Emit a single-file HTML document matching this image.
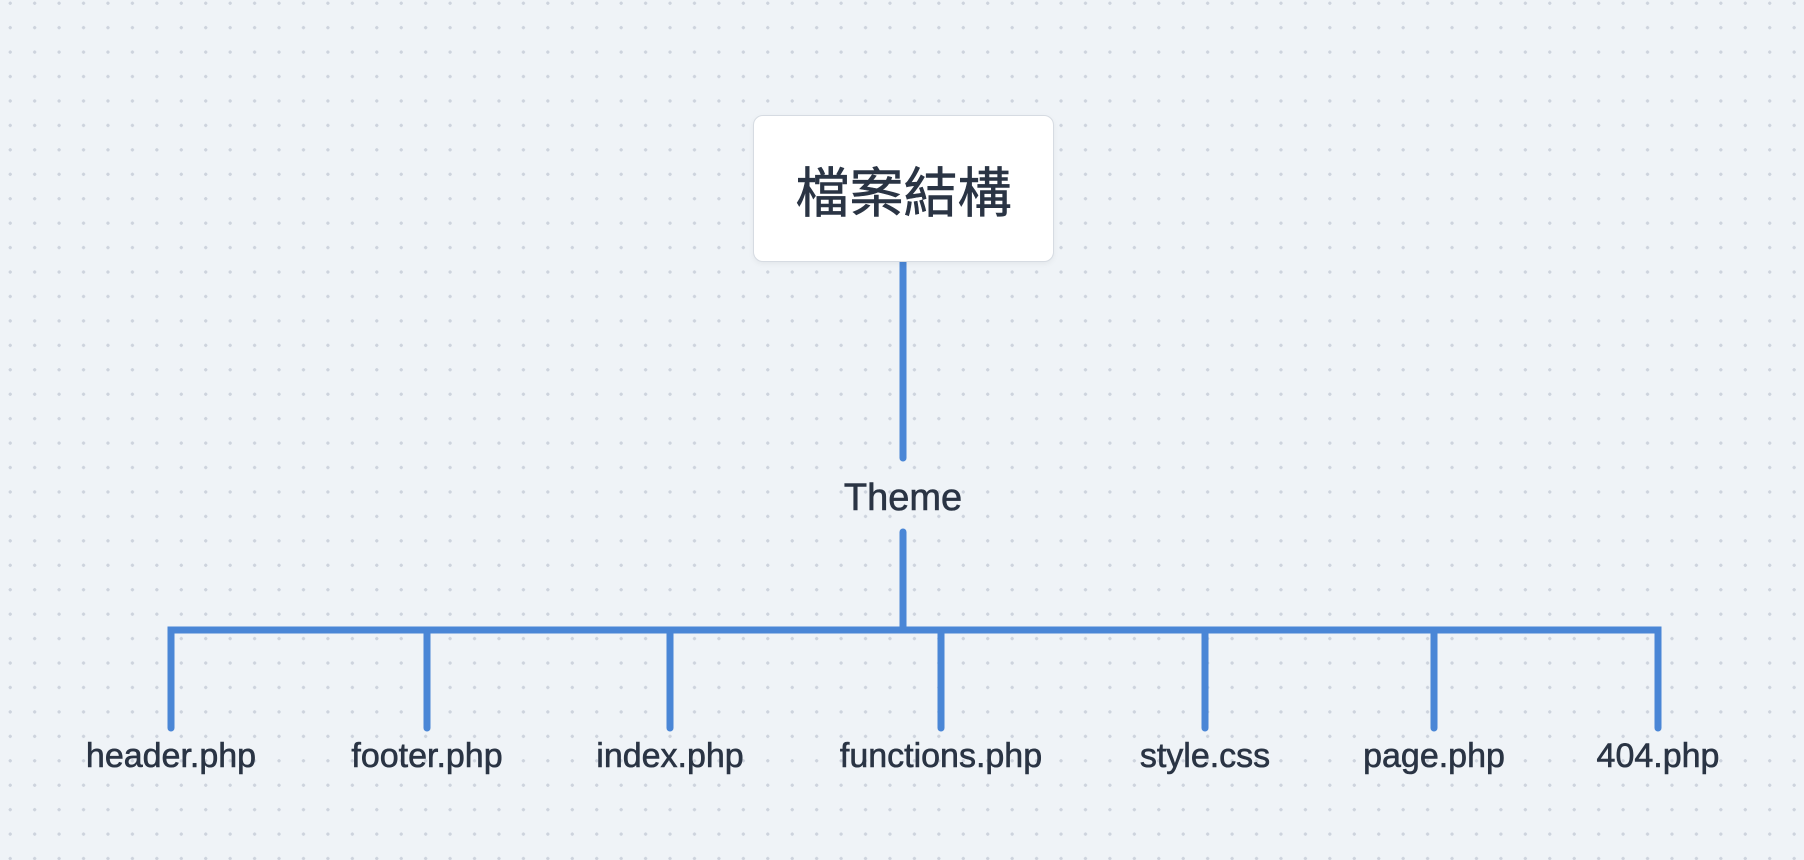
<!DOCTYPE html>
<html><head><meta charset="utf-8"><style>
html,body{margin:0;padding:0}
body{width:1804px;height:860px;overflow:hidden;position:relative;background-color:#eff3f7;
background-image:radial-gradient(circle,#cdd3dd 1.5px,transparent 1.8px);background-size:24.45px 24.45px;background-position:-2px -9px;
font-family:"Liberation Sans","Noto Sans CJK TC",sans-serif;color:#2a3444}
.box{position:absolute;left:753px;top:115px;width:301px;height:147px;background:#fff;border:1px solid #d6dbe2;border-radius:10px;box-sizing:border-box;box-shadow:0 2px 6px rgba(0,0,0,.05);display:flex;align-items:center;justify-content:center;font-size:54px;font-family:"Noto Sans CJK TC",sans-serif;font-weight:400;-webkit-text-stroke:0.6px #2a3444}
.l{position:absolute;font-size:34px;transform:translateX(-50%);white-space:nowrap;top:737px;-webkit-text-stroke:0.6px #2a3444}
</style></head><body>
<svg width="1804" height="860" style="position:absolute;left:0;top:0">
<g stroke="#4a86d6" stroke-width="7" stroke-linecap="round" fill="none">
<line x1="903" y1="262" x2="903" y2="458"/>
<line x1="903" y1="532" x2="903" y2="628"/>
<path d="M171 728 V630 H1658 V728"/>
<line x1="427" y1="630" x2="427" y2="728"/>
<line x1="670" y1="630" x2="670" y2="728"/>
<line x1="941" y1="630" x2="941" y2="728"/>
<line x1="1205" y1="630" x2="1205" y2="728"/>
<line x1="1434" y1="630" x2="1434" y2="728"/>
</g></svg>
<div class="box">檔案結構</div>
<div class="l" style="left:903px;top:477px;font-size:38px">Theme</div>
<div class="l" style="left:171px">header.php</div>
<div class="l" style="left:427px">footer.php</div>
<div class="l" style="left:670px">index.php</div>
<div class="l" style="left:941px">functions.php</div>
<div class="l" style="left:1205px">style.css</div>
<div class="l" style="left:1434px">page.php</div>
<div class="l" style="left:1658px">404.php</div>
</body></html>
